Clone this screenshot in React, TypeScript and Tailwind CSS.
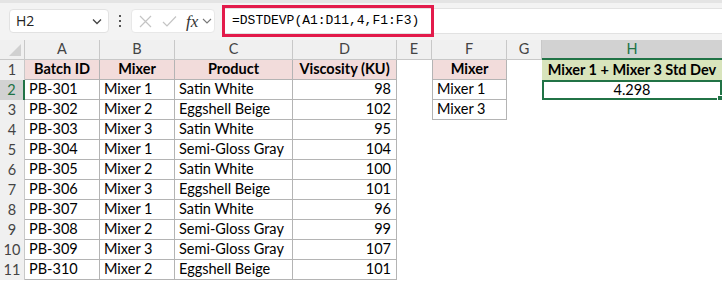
import React from "react"

const cols = ["A", "B", "C", "D", "E", "F", "G", "H"]
const widths = ["w-[75px]", "w-[75px]", "w-[118px]", "w-[104px]", "w-[35px]", "w-[75px]", "w-[35px]", "w-[180px]"]

const rows: [string, string, string, string][] = [
  ["PB-301", "Mixer 1", "Satin White", "98"],
  ["PB-302", "Mixer 2", "Eggshell Beige", "102"],
  ["PB-303", "Mixer 3", "Satin White", "95"],
  ["PB-304", "Mixer 1", "Semi-Gloss Gray", "104"],
  ["PB-305", "Mixer 2", "Satin White", "100"],
  ["PB-306", "Mixer 3", "Eggshell Beige", "101"],
  ["PB-307", "Mixer 1", "Satin White", "96"],
  ["PB-308", "Mixer 2", "Semi-Gloss Gray", "99"],
  ["PB-309", "Mixer 3", "Semi-Gloss Gray", "107"],
  ["PB-310", "Mixer 2", "Eggshell Beige", "101"],
]

const cellFont = "font-['Lato','Liberation_Sans',sans-serif] text-[14.5px] leading-none"

// cell with border (part of a bordered range)
const Box = ({ w, className = "", children }: { w: string; className?: string; children?: React.ReactNode }) => (
  <div className={`${w} h-full flex items-center border-r border-b border-[#b4b4b4] px-[4px] whitespace-nowrap overflow-hidden ${className}`}>
    {children}
  </div>
)

const Empty = ({ w, className = "" }: { w: string; className?: string }) => <div className={`${w} h-full ${className}`} />

const FormulaBar = () => (
  <div className="h-[40px] bg-[#f3f3f3] border-t-[3px] border-[#e4e4e4] relative flex items-start">
    {/* name box */}
    <div className="ml-[9px] mt-[6px] w-[100px] h-[24px] bg-white border border-[#e2e2e2] rounded-[4px] flex items-center justify-between pl-[6px] pr-[5px]">
      <span className="font-['Open_Sans',sans-serif] text-[14px] text-[#222]">H2</span>
      <svg width="12" height="12" viewBox="0 0 12 12">
        <path d="M2 4.5 L6 8.5 L10 4.5" fill="none" stroke="#444" strokeWidth="1.3" />
      </svg>
    </div>
    {/* dots */}
    <div className="ml-[10px] mt-[12px] flex flex-col gap-[3px]">
      <span className="w-[2px] h-[2px] bg-[#555] block" />
      <span className="w-[2px] h-[2px] bg-[#555] block" />
      <span className="w-[2px] h-[2px] bg-[#555] block" />
    </div>
    {/* fx box */}
    <div className="ml-[10px] mt-[6px] w-[84px] h-[24px] bg-white border border-[#e8e8e8] rounded-[4px] flex items-center pl-[7px]">
      <svg width="13" height="13" viewBox="0 0 13 13">
        <path d="M1 1 L12 12 M12 1 L1 12" stroke="#c4c4c4" strokeWidth="1.2" />
      </svg>
      <svg width="15" height="13" viewBox="0 0 15 13" className="ml-[10px]">
        <path d="M1 7 L5 11 L14 1.5" fill="none" stroke="#c4c4c4" strokeWidth="1.2" />
      </svg>
      <span className="ml-[9px] font-['Liberation_Serif',serif] italic text-[17px] text-[#333] leading-none">fx</span>
      <svg width="10" height="10" viewBox="0 0 10 10" className="ml-[4px]">
        <path d="M1 3 L5 7 L9 3" fill="none" stroke="#777" strokeWidth="1.1" />
      </svg>
    </div>
    {/* formula input */}
    <div className="ml-[8px] mt-[5px] flex-1 h-[26px] bg-white border-y border-[#e2e2e2] relative">
      <div className="absolute left-[-1px] top-[-4px] w-[212px] h-[32px] border-[3px] border-[#e31b4b]" />
      <span className="absolute left-[9px] top-[5px] font-['Liberation_Mono',monospace] text-[13px] text-black leading-none">
        =DSTDEVP(A1:D11,4,F1:F3)
      </span>
    </div>
  </div>
)

export default function App() {
  return (
    <div className={`w-[722px] h-[282px] bg-white overflow-hidden ${cellFont}`}>
      <FormulaBar />
      {/* column headers */}
      <div className="flex h-[20px] bg-[#f0f0f0] text-[#444]">
        <div className="w-[25px] h-full border-r border-b border-[#c8c8c8] relative">
          <svg width="12" height="12" viewBox="0 0 12 12" className="absolute right-[3px] bottom-[3px]">
            <path d="M12 0 L12 12 L0 12 Z" fill="#d0d0d0" />
          </svg>
        </div>
        {cols.map((c, i) =>
          c === "H" ? (
            <div key={c} className={`${widths[i]} h-full flex items-center justify-center bg-[#d2d2d2] text-[#217346] border-b-2 border-[#217346]`}>
              {c}
            </div>
          ) : (
            <div key={c} className={`${widths[i]} h-full flex items-center justify-center border-r border-b border-[#c8c8c8]`}>
              {c}
            </div>
          )
        )}
      </div>
      {/* row 1 */}
      <div className="flex h-[20px]">
        <div className="w-[25px] h-full flex items-center justify-center bg-[#f0f0f0] text-[#444] border-r border-[#c8c8c8]">1</div>
        <Box w={widths[0]} className="justify-center font-bold bg-[#f2dcdb]">Batch ID</Box>
        <Box w={widths[1]} className="justify-center font-bold bg-[#f2dcdb]">Mixer</Box>
        <Box w={widths[2]} className="justify-center font-bold bg-[#f2dcdb]">Product</Box>
        <Box w={widths[3]} className="justify-center font-bold bg-[#f2dcdb]">Viscosity (KU)</Box>
        <Empty w={widths[4]} />
        <Box w={widths[5]} className="justify-center font-bold bg-[#f2dcdb] border-l">Mixer</Box>
        <Empty w={widths[6]} />
        <Box w={widths[7]} className="justify-center font-bold bg-[#d8e4bc] border-b-0 border-r-0">Mixer 1 + Mixer 3 Std Dev</Box>
      </div>
      {rows.map((r, idx) => {
        const n = idx + 2
        const sel = n === 2
        return (
          <div key={n} className="flex h-[20px]">
            <div
              className={`w-[25px] h-full flex items-center justify-center ${
                sel ? "bg-[#d2d2d2] text-[#217346] border-r-2 border-[#217346]" : "bg-[#f0f0f0] text-[#444] border-r border-[#c8c8c8]"
              }`}
            >
              {n}
            </div>
            <Box w={widths[0]}>{r[0]}</Box>
            <Box w={widths[1]}>{r[1]}</Box>
            <Box w={widths[2]}>{r[2]}</Box>
            <Box w={widths[3]} className="justify-end pr-[5px]">{r[3]}</Box>
            <Empty w={widths[4]} />
            {n === 2 && <Box w={widths[5]} className="border-l">Mixer 1</Box>}
            {n === 3 && <Box w={widths[5]} className="border-l">Mixer 3</Box>}
            {n > 3 && <Empty w={widths[5]} />}
            <Empty w={widths[6]} />
            {sel ? (
              <div className={`${widths[7]} h-full relative flex items-center justify-center border-2 border-[#217346]`}>
                4.298
                <span className="absolute right-[-3px] bottom-[-3px] w-[6px] h-[6px] bg-[#217346] border border-white" />
              </div>
            ) : (
              <Empty w={widths[7]} />
            )}
          </div>
        )
      })}
    </div>
  )
}
